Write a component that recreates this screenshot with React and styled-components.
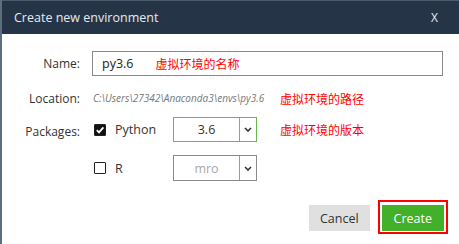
import React from "react";
import styled, { createGlobalStyle } from "styled-components";

const Global = createGlobalStyle`
  html, body { margin: 0; padding: 0; background: #fff; }
  body { font-family: "Open Sans", "Noto Sans", "Noto Sans CJK SC", sans-serif; }
`;

function Chevron() {
  return (
    <svg width="8" height="5" viewBox="0 0 8 5">
      <path d="M1 1 L4 4 L7 1" fill="none" stroke="#333" strokeWidth="1.6" />
    </svg>
  );
}

function Check({ checked }) {
  return (
    <CheckBox $checked={checked}>
      {checked && (
        <svg width="10" height="10" viewBox="0 0 10 10">
          <path d="M1.8 5.2 L4 7.4 L8.4 2.4" fill="none" stroke="#fff" strokeWidth="1.8" />
        </svg>
      )}
    </CheckBox>
  );
}

export default function App() {
  return (
    <>
      <Global />
      <Dialog>
        <Header>
          <span>Create new environment</span>
          <Close>X</Close>
        </Header>
        <Body>
          <Row $h={25}>
            <Label>Name:</Label>
            <TextBox>
              py3.6
              <Note $ml={22}>虚拟环境的名称</Note>
            </TextBox>
          </Row>
          <Row $h={20} $mt={12}>
            <Label>Location:</Label>
            <Line>
              <Path>C:\Users\27342\Anaconda3\envs\py3.6</Path>
              <Note>虚拟环境的路径</Note>
            </Line>
          </Row>
          <Row $mt={9} $top>
            <Label $pt={6}>Packages:</Label>
            <Packages>
              <Line>
                <Pkg>
                  <Check checked />
                  <PkgName>Python</PkgName>
                </Pkg>
                <Select $active>
                  <Value>3.6</Value>
                  <Arrow>
                    <Chevron />
                  </Arrow>
                </Select>
                <Note $ml={23}>虚拟环境的版本</Note>
              </Line>
              <Line>
                <Pkg>
                  <Check />
                  <PkgName>R</PkgName>
                </Pkg>
                <Select $tall>
                  <Value $muted>mro</Value>
                  <Arrow>
                    <Chevron />
                  </Arrow>
                </Select>
              </Line>
            </Packages>
          </Row>
          <Footer>
            <Button>Cancel</Button>
            <Highlight>
              <Button $primary>Create</Button>
            </Highlight>
          </Footer>
        </Body>
      </Dialog>
    </>
  );
}

const Dialog = styled.div`
  width: 459px;
  height: 244px;
  box-sizing: border-box;
  border-left: 2px solid #5d6e7e;
  background: #fff;
  overflow: hidden;
`;

const Header = styled.div`
  height: 34px;
  box-sizing: border-box;
  background: #253446;
  border-top: 1px solid #4b5b6b;
  display: flex;
  align-items: center;
  justify-content: space-between;
  padding: 0 21px 0 12px;
  color: #e6ebef;
  font-size: 12.5px;
`;

const Close = styled.span`
  font-size: 12px;
`;

const Body = styled.div`
  padding: 17px 16px 0 0;
  display: flex;
  flex-direction: column;
`;

const Row = styled.div`
  display: grid;
  grid-template-columns: 78px 1fr;
  column-gap: 12px;
  align-items: ${(p) => (p.$top ? "start" : "center")};
  height: ${(p) => (p.$h ? `${p.$h}px` : "auto")};
  margin-top: ${(p) => p.$mt || 0}px;
`;

const Label = styled.div`
  text-align: right;
  font-size: 12px;
  color: #333;
  padding-top: ${(p) => p.$pt || 0}px;
`;

const TextBox = styled.div`
  height: 25px;
  box-sizing: border-box;
  border: 1px solid #8a8a8a;
  display: flex;
  align-items: center;
  padding-left: 9px;
  font-size: 12.5px;
  color: #222;
`;

const Note = styled.span`
  color: #f00;
  font-family: "Noto Sans CJK SC", sans-serif;
  font-size: 12px;
  margin-left: ${(p) => p.$ml || 0}px;
  white-space: nowrap;
`;

const Line = styled.div`
  display: flex;
  align-items: center;
`;

const Path = styled.span`
  width: 187px;
  padding-left: 1px;
  font-size: 10px;
  font-style: italic;
  color: #777;
  white-space: nowrap;
`;

const Packages = styled.div`
  display: flex;
  flex-direction: column;
  gap: 13px;
`;

const Pkg = styled.div`
  width: 81px;
  box-sizing: border-box;
  padding-left: 2px;
  display: flex;
  align-items: center;
`;

const CheckBox = styled.span`
  width: 12px;
  height: 12px;
  box-sizing: border-box;
  border-radius: 1px;
  border: 1.5px solid #222;
  background: ${(p) => (p.$checked ? "#111" : "#fff")};
  display: flex;
  align-items: center;
  justify-content: center;
`;

const PkgName = styled.span`
  margin-left: 9px;
  font-size: 12.5px;
  color: #333;
`;

const Select = styled.div`
  width: 84px;
  height: ${(p) => (p.$tall ? 26 : 25)}px;
  box-sizing: border-box;
  border: 1px solid ${(p) => (p.$active ? "#69b84e" : "#8a8a8a")};
  display: flex;
`;

const Value = styled.div`
  flex: 1;
  display: flex;
  align-items: center;
  justify-content: center;
  font-size: 12.5px;
  color: ${(p) => (p.$muted ? "#a8a8a8" : "#333")};
  border-right: 1px solid #9a9a9a;
`;

const Arrow = styled.div`
  width: 16px;
  display: flex;
  align-items: center;
  justify-content: center;
`;

const Footer = styled.div`
  margin-top: 19px;
  display: flex;
  justify-content: flex-end;
  align-items: flex-start;
  gap: 8px;
`;

const Highlight = styled.div`
  border: 2px solid #f00;
  padding: 3px 2px 1px;
  margin-right: -5px;
`;

const Button = styled.div`
  height: 26px;
  margin-top: ${(p) => (p.$primary ? 0 : 5)}px;
  padding: 0 ${(p) => (p.$primary ? 12 : 11)}px;
  display: flex;
  align-items: center;
  font-size: 12.5px;
  background: ${(p) => (p.$primary ? "#43b02a" : "#e0e0e0")};
  color: ${(p) => (p.$primary ? "#fff" : "#333")};
`;
